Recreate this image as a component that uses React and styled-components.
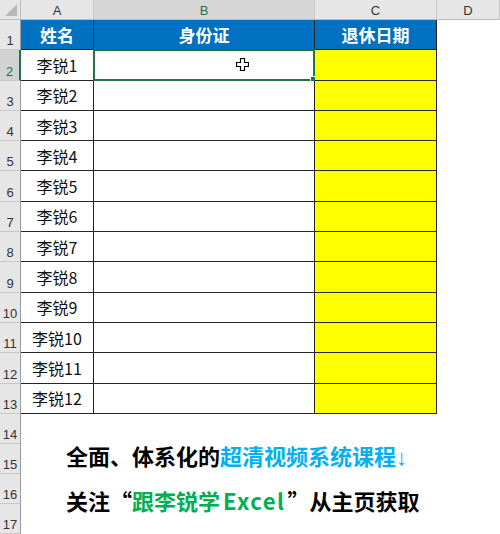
import React from 'react'
import styled, { createGlobalStyle } from 'styled-components'

const GlobalStyle = createGlobalStyle`
  html, body {
    margin: 0;
    padding: 0;
    background: #fff;
    overflow: hidden;
  }
  body {
    font-family: "Noto Sans CJK SC", "Liberation Sans", sans-serif;
  }
`

const ROW_H = '30.3px'
const COLS = ['A', 'B', 'C', 'D']
const names = Array.from({ length: 12 }, (_, i) => `李锐${i + 1}`)

const Sheet = styled.div`
  display: grid;
  grid-template-columns: 21px 73px 221px 122px 63px;
  grid-template-rows: 20px repeat(13, ${ROW_H}) repeat(4, 30px);
  width: 500px;
  height: 534px;
  position: relative;
  background: #fff;
`

const Corner = styled.div`
  background: #e6e6e6;
  border-right: 1px solid #bcbcbc;
  border-bottom: 1px solid #bcbcbc;
  position: relative;
  &::after {
    content: '';
    position: absolute;
    right: 3px;
    bottom: 3px;
    border-left: 12px solid transparent;
    border-bottom: 12px solid #b8b8b8;
  }
`

const ColHead = styled.div`
  background: ${p => (p.$active ? '#d6d6d6' : '#e6e6e6')};
  border-right: 1px solid #c6c6c6;
  border-bottom: 1px solid #bcbcbc;
  display: flex;
  align-items: center;
  justify-content: center;
  font-family: "Liberation Sans", sans-serif;
  font-size: 13px;
  color: ${p => (p.$active ? '#217346' : '#333')};
  padding-top: 1px;
`

const RowHead = styled.div`
  background: ${p => (p.$active ? '#d2d2d2' : '#e6e6e6')};
  border-right: ${p => (p.$active ? '2px solid #217346' : '1px solid #9b9b9b')};
  border-bottom: 1px solid #c8c8c8;
  display: flex;
  align-items: flex-end;
  justify-content: center;
  font-family: "Liberation Sans", sans-serif;
  font-size: 13px;
  line-height: 15px;
  color: ${p => (p.$active ? '#217346' : '#333')};
  padding-bottom: 1px;
  box-sizing: border-box;
`

const Cell = styled.div`
  box-sizing: border-box;
  background: ${p => p.$bg || '#fff'};
  border-right: 1px solid #262626;
  border-bottom: 1px solid #262626;
  display: flex;
  align-items: center;
  justify-content: center;
  font-size: ${p => (p.$head ? '17px' : '16px')};
  font-weight: ${p => (p.$head ? 700 : 400)};
  color: ${p => (p.$head ? '#fff' : '#111')};
  position: relative;
`

const Blank = styled.div`
  background: #fff;
`

const Selection = styled.div`
  position: absolute;
  inset: -1px -1px -1px -1px;
  border: 2px solid #217346;
  pointer-events: none;
  &::after {
    content: '';
    position: absolute;
    right: -4px;
    bottom: -4px;
    width: 5px;
    height: 5px;
    background: #217346;
    border: 1px solid #fff;
  }
`

const Cursor = styled.svg`
  position: absolute;
  left: 142px;
  top: 8px;
`

const TextBox = styled.div`
  grid-column: 2 / 6;
  grid-row: 15 / 19;
  padding: 20px 0 0 45px;
  font-size: 22px;
  font-weight: 700;
  line-height: 42px;
  color: #000;
  white-space: nowrap;
`

const Blue = styled.span`
  color: #00b0f0;
`

const Green = styled.span`
  color: #00b050;
`

const Latin = styled.span`
  margin: 0 2px 0 3px;
  letter-spacing: 1.5px;
`

const Arrow = styled.span`
  font-family: "Liberation Sans", sans-serif;
  font-weight: 400;
`

export default function App() {
  return (
    <>
      <GlobalStyle />
      <Sheet>
        <Corner />
        {COLS.map(c => (
          <ColHead key={c} $active={c === 'B'}>{c}</ColHead>
        ))}

        <RowHead>1</RowHead>
        <Cell $bg="#0070c0" $head>姓名</Cell>
        <Cell $bg="#0070c0" $head>身份证</Cell>
        <Cell $bg="#0070c0" $head>退休日期</Cell>
        <Blank />

        {names.map((n, i) => (
          <React.Fragment key={n}>
            <RowHead $active={i === 0}>{i + 2}</RowHead>
            <Cell>{n}</Cell>
            <Cell>
              {i === 0 && (
                <>
                  <Selection />
                  <Cursor width="13" height="13" viewBox="0 0 13 13">
                    <path
                      d="M4.5 0.5h4v4h4v4h-4v4h-4v-4h-4v-4h4z"
                      fill="#fff"
                      stroke="#000"
                      strokeWidth="1.2"
                    />
                  </Cursor>
                </>
              )}
            </Cell>
            <Cell $bg="#ffff00" />
            <Blank />
          </React.Fragment>
        ))}

        {[14, 15, 16, 17].map(n => (
          <RowHead key={n} style={{ gridColumn: 1, gridRow: n + 1 }}>{n}</RowHead>
        ))}
        <TextBox>
          <div>全面、体系化的<Blue>超清视频系统课程<Arrow>↓</Arrow></Blue></div>
          <div>关注“<Green>跟李锐学<Latin>Excel</Latin></Green>”从主页获取</div>
        </TextBox>
      </Sheet>
    </>
  )
}
